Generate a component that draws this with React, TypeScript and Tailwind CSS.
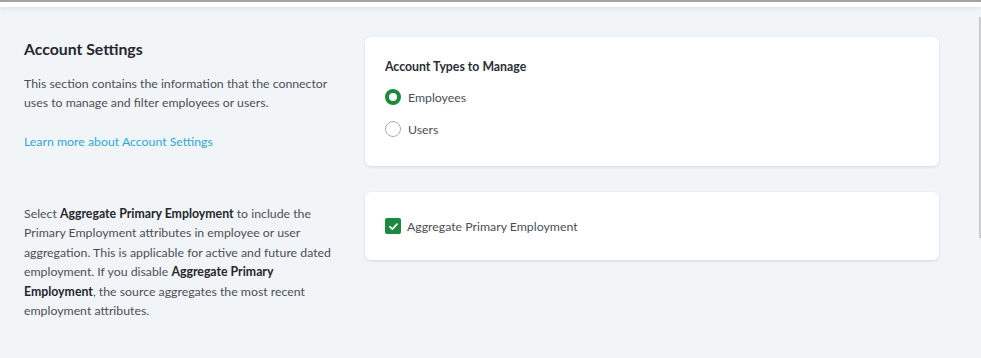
export default function App() {
  return (
    <div className="w-[981px] h-[358px] overflow-hidden bg-[#f2f5f8] relative font-['Lato',sans-serif] text-[12.3px] leading-[19px] text-[#4a4f57]">
      <div className="h-[7px] bg-white border-t-2 border-[#a3a3a3] shadow-[0_2px_4px_rgba(0,0,0,0.08)] relative z-10"></div>
      <div className="absolute right-0 top-[17px] w-[2px] h-[221px] bg-[#c9cbce]"></div>

      <div className="flex flex-col pl-[24px] pt-[30px]">
        {/* account types */}
        <div className="flex items-start gap-[24px]">
          <div className="w-[317px] pt-[2px]">
            <h2 className="text-[15.8px] leading-[19px] font-bold text-[#23272e]">Account Settings</h2>
            <p className="mt-[16px]">
              This section contains the information that the connector uses to manage and filter employees or users.
            </p>
            <a className="block mt-[20px] text-[#2aa9dc]">Learn more about Account Settings</a>
          </div>
          <div className="w-[574px] bg-white rounded-[6px] shadow-[0_1px_3px_rgba(0,0,0,0.12)] pl-[20px] pt-[20px] pb-[25px]">
            <div className="font-bold text-[#2a2e35]">Account Types to Manage</div>
            <div className="mt-[9px] flex flex-col gap-[8px]">
              <label className="flex items-center h-[24px] gap-[7px]">
                <span className="w-[16px] h-[16px] rounded-full border-[4px] border-[#1a8a3c] bg-white"></span>
                <span>Employees</span>
              </label>
              <label className="flex items-center h-[24px] gap-[7px]">
                <span className="w-[16px] h-[16px] rounded-full border-[1.5px] border-[#a9adb3] bg-white"></span>
                <span>Users</span>
              </label>
            </div>
          </div>
        </div>

        {/* aggregate primary employment */}
        <div className="flex items-start gap-[24px] mt-[26px]">
          <div className="w-[317px] pt-[12px]">
            <p className="leading-[19.4px]">
              Select <b className="text-[#23272e]">Aggregate Primary Employment</b> to include the Primary Employment attributes in employee or user aggregation. This is applicable for active and future dated employment. If you disable <b className="text-[#23272e]">Aggregate Primary Employment</b>, the source aggregates the most recent employment attributes.
            </p>
          </div>
          <div className="w-[574px] h-[68px] bg-white rounded-[6px] shadow-[0_1px_3px_rgba(0,0,0,0.12)] pl-[20px] flex items-center gap-[6px]">
            <span className="w-[16px] h-[16px] rounded-[2px] bg-[#1a8a3c] flex items-center justify-center">
              <svg width="11" height="11" viewBox="0 0 12 12" fill="none">
                <path d="M2.2 6.3 4.8 8.8 9.8 3.4" stroke="white" strokeWidth="1.9" strokeLinecap="round" strokeLinejoin="round" />
              </svg>
            </span>
            <span>Aggregate Primary Employment</span>
          </div>
        </div>
      </div>
    </div>
  );
}
